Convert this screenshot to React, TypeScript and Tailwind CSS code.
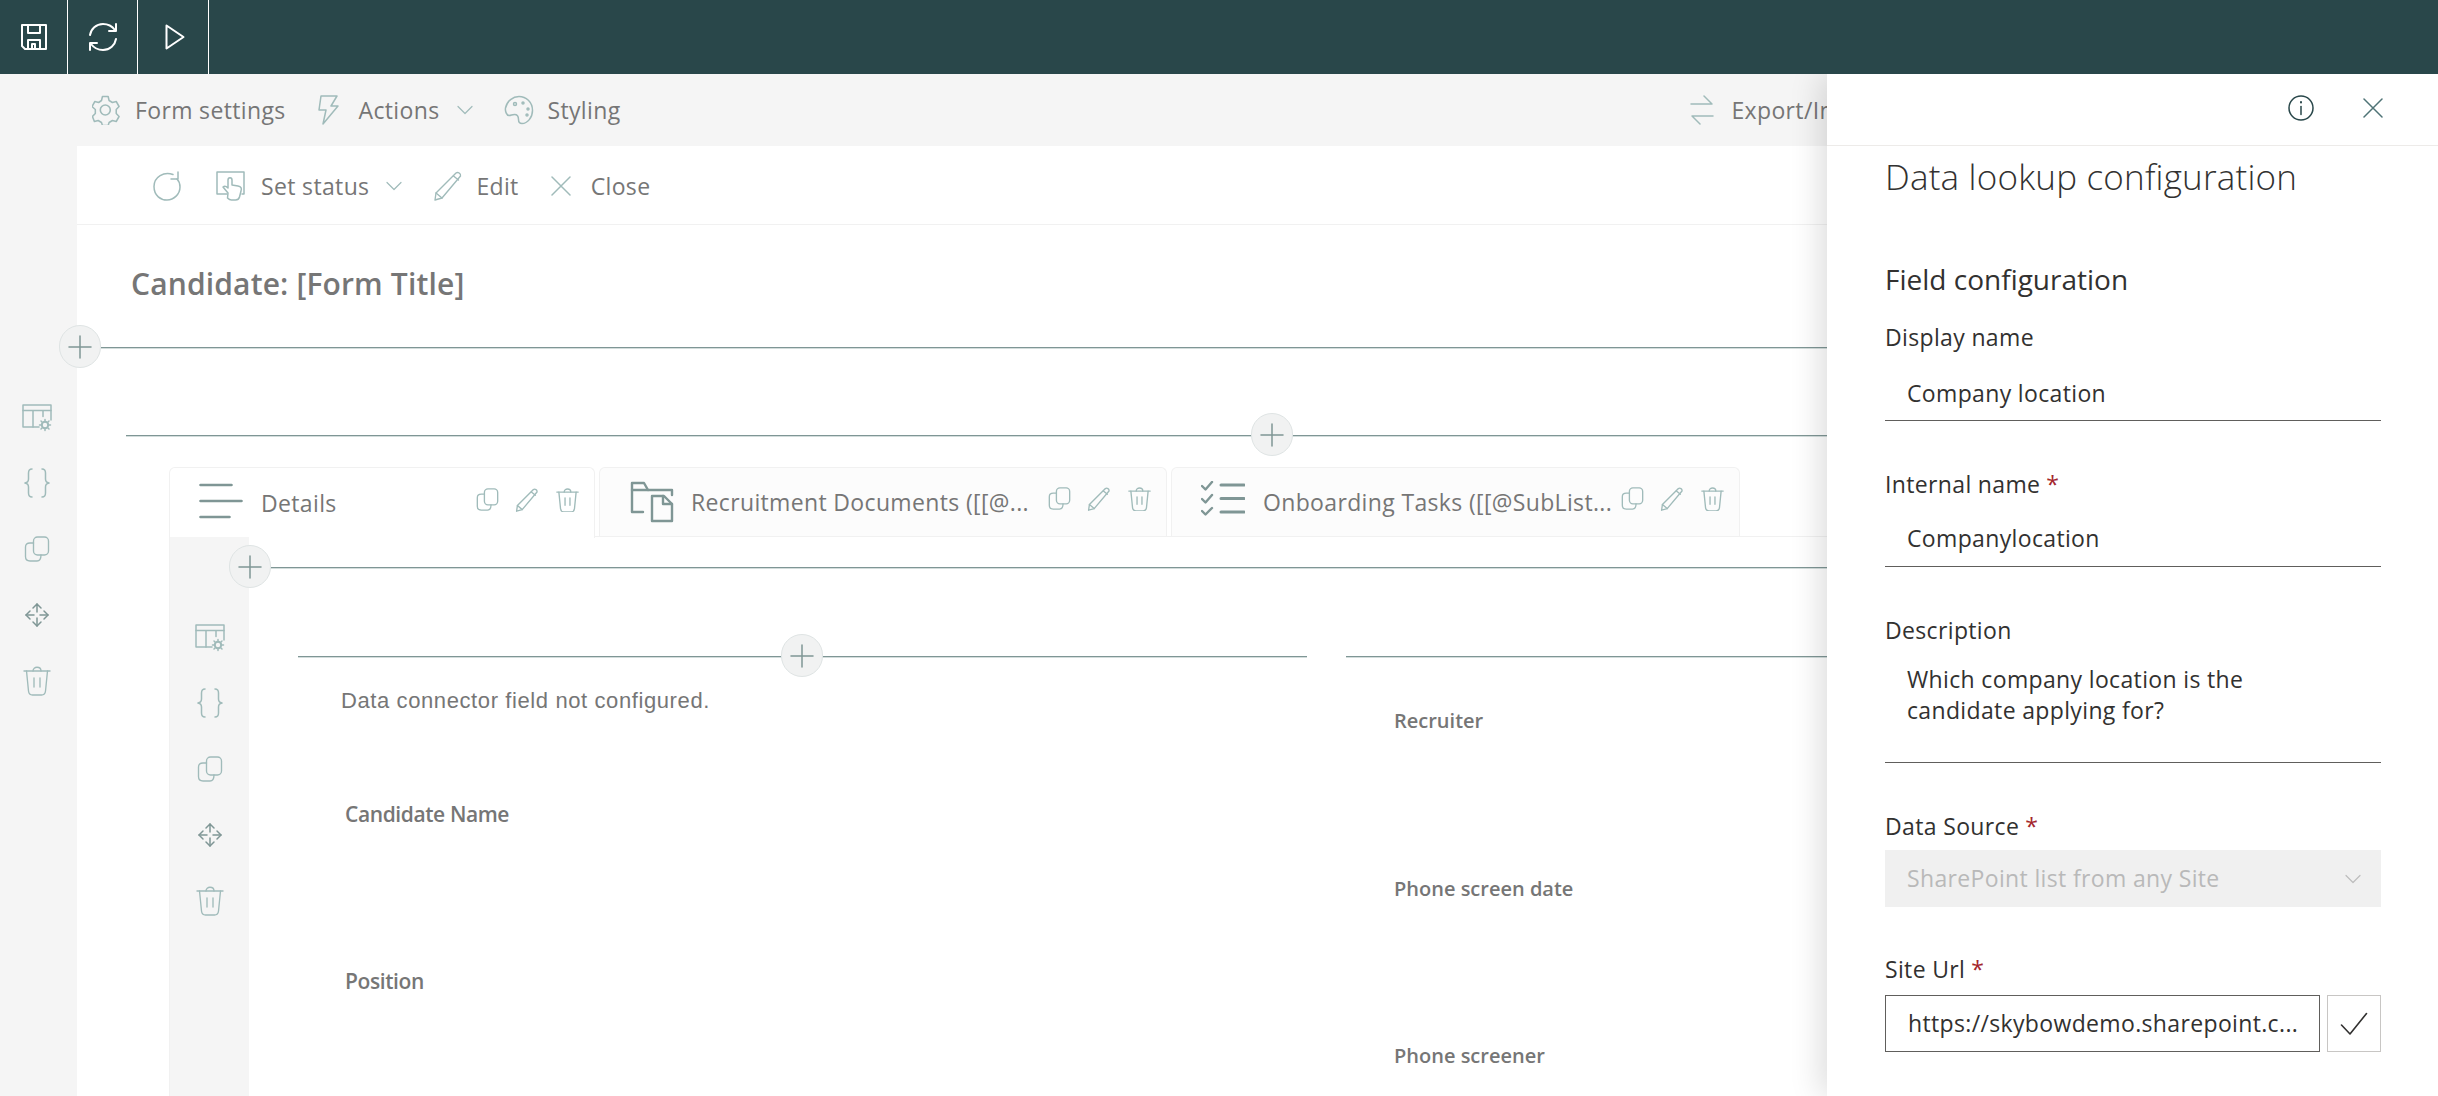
import React from "react";

type P = { className?: string };
const Base = ({ w, h, sw = 1.5, className, children }: { w: number; h: number; sw?: number; className?: string; children: React.ReactNode }) => (
  <svg width={w} height={h} viewBox={`0 0 ${w} ${h}`} fill="none" stroke="currentColor" strokeWidth={sw} strokeLinecap="round" strokeLinejoin="round" className={"shrink-0 " + (className ?? "")}>
    {children}
  </svg>
);

const Save = () => (
  <Base w={26} h={26} sw={2} className="text-white">
    <path d="M1 1h24v24H4l-3-3z" />
    <path d="M7 1v8h12V1" />
    <path d="M7 25v-9h12v9" />
    <path d="M11 25v-5h3v5" />
  </Base>
);
const Sync = () => (
  <Base w={30} h={30} sw={2} className="text-white">
    <path d="M2 13C3 7 8 2 15 2c5 0 9 2 12 6" />
    <path d="M28 2v7h-7" />
    <path d="M28 17c-1 6-6 11-13 11-5 0-9-2-12-6" />
    <path d="M2 28v-7h7" />
  </Base>
);
const Play = () => (
  <Base w={20} h={26} sw={2} className="text-white">
    <path d="M1.500 1.500 18.500 13 1.500 24.500z" />
  </Base>
);
const Gear = () => (
  <Base w={28} h={30} sw={1.6}>
    <path d="M11 2h6l1 4 3.500 2 4-1 3 5-3 3v4l3 3-3 5-4-1-3.500 2-1 3h-6l-1-3-3.500-2-4 1-2-5 3-3v-4L0 12l3-5 4 1 3-2z" transform="translate(0 -.5) scale(.95 1)" />
    <circle cx="13.300" cy="15" r="5" />
  </Base>
);
const Bolt = () => (
  <Base w={22} h={30}>
    <path d="M4 1h16l-6 10h7L6 29l3-14H2z" />
  </Base>
);
const Chevron = ({ className }: P) => (
  <Base w={16} h={10} sw={1.2} className={className}>
    <path d="M1 1.500 8 8.500l7-7" />
  </Base>
);
const Palette = () => (
  <Base w={30} h={30}>
    <path d="M15 1.500C22 1.500 28.500 7 28.500 15.500c0 7-5 13-10.500 13-3 0-3.500-2-3.500-4 0-3-1-5-4-5-3 0-3 1-5.500 1C2.500 20.500 1 16 1.500 13 3 6 9 1.500 15 1.500z" />
    <circle cx="11" cy="9" r="1.500" />
    <circle cx="19" cy="8" r="1" />
    <circle cx="24" cy="14" r="1" />
    <circle cx="23" cy="20" r="1" />
  </Base>
);
const Exchange = () => (
  <Base w={24} h={30}>
    <path d="M1 9h21l-8-8" />
    <path d="M23 21H2l8 8" />
  </Base>
);
const Refresh = () => (
  <Base w={30} h={30}>
    <path d="M21 3.500C12 0 2 6 2 15.500S9 29 15 29c7 0 13-6 13-13 0-3-1-6-3-8" />
    <path d="M26 1v7h-7" />
  </Base>
);
const Status = () => (
  <Base w={30} h={30}>
    <path d="M11 23H1V1h27v22h-2" />
    <path d="M12 22 7 16c2-1.500 3-1 5 1V9c0-3 4-3 4 0v5l6 1c3 .5 4 2 3 5l-1.500 6c-.5 2-2 3-4 3h-4c-1.500 0-3-1-4-2z" fill="#ffffff" />
  </Base>
);
const Pencil = ({ s = 30 }: { s?: number }) => (
  <svg width={s} height={s} viewBox="0 0 30 30" fill="none" stroke="currentColor" strokeWidth={1.5 * (30 / s) * 0.9} strokeLinejoin="round" strokeLinecap="round" className="shrink-0">
    <path d="M23 2c2-1.500 5 .5 4.500 3L9 27l-7 2 1-7z" />
    <path d="M20.500 5l5 4M3 22l6 5" />
  </svg>
);
const XIcon = ({ s = 20 }: { s?: number }) => (
  <Base w={s} h={s}>
    <path d={`M1 1 ${s - 1} ${s - 1}M${s - 1} 1 1 ${s - 1}`} />
  </Base>
);
const TableGear = () => (
  <Base w={30} h={28}>
    <path d="M17 23H1V1h28v15" />
    <path d="M1 6.500h28M11 6.500V23M21 6.500v6" />
    <circle cx="23" cy="21" r="3.200" strokeWidth="2" />
    <path d="M23 15.500v2M23 24.500v2M17.500 21h2M26.500 21h2M19 17l1.500 1.500M25.500 23.500 27 25M19 25l1.500-1.500M25.500 18.500 27 17" />
  </Base>
);
const Braces = () => (
  <Base w={26} h={30}>
    <path d="M8 1C5 1 4.500 2.500 4.500 5v6c0 2-1 3.500-3.500 4 2.500.5 3.500 2 3.500 4v6c0 2.500.5 4 3.500 4" />
    <path d="M18 1c3 0 3.500 1.500 3.500 4v6c0 2 1 3.500 3.500 4-2.500.5-3.500 2-3.500 4v6c0 2.500-.5 4-3.500 4" />
  </Base>
);
const Copy = ({ s = 26 }: { s?: number }) => (
  <svg width={s} height={s} viewBox="0 0 26 26" fill="none" stroke="currentColor" strokeWidth={1.5 * (26 / s) * 0.9} strokeLinecap="round" strokeLinejoin="round" className="shrink-0">
    <rect x="9.500" y="1" width="15" height="18" rx="4" />
    <path d="M9.500 7H6C3 7 1.500 8.500 1.500 11v9.500C1.500 23.500 3 25 6 25h7c2.500 0 4-1.500 4-6" />
  </svg>
);
const MoveIcon = () => (
  <Base w={26} h={26} className="text-[#7f9695]">
    <path d="M13 2v8M13 16v8M2 13h8M16 13h8" />
    <path d="M9 6l4-4 4 4M9 20l4 4 4-4M6 9l-4 4 4 4M20 9l4 4-4 4" />
  </Base>
);
const Trash = ({ s = 28 }: { s?: number }) => (
  <svg width={s} height={s * 30 / 28} viewBox="0 0 28 30" fill="none" stroke="currentColor" strokeWidth={1.5 * (28 / s) * 0.9} strokeLinecap="round" strokeLinejoin="round" className="shrink-0">
    <path d="M1 5h26" />
    <path d="M10 5c0-5 8-5 8 0" />
    <path d="M3.500 5l2 20c.2 2 1.500 4 4 4h9c2.500 0 3.800-2 4-4l2-20" />
    <path d="M11 12v9M17 12v9" />
  </svg>
);
const DetailsIcon = () => (
  <Base w={44} h={36} sw={2.6}>
    <path d="M1.500 2h31M1.500 18h41M1.500 34h29" />
  </Base>
);
const FolderDoc = () => (
  <Base w={44} h={42} sw={2.4}>
    <path d="M13 31H2V2h12l4 7h24v5" />
    <path d="M2 9h16" />
    <path d="M22 40V15h12l8 8v17z" />
    <path d="M33 15v8h9" />
  </Base>
);
const Checklist = () => (
  <Base w={44} h={36} sw={2.4}>
    <path d="M1 5l3.500 3.500L11 1M1 18l3.500 3.500L11 14M1 30l3.500 3.500L11 27" />
    <path d="M20 4h23M20 17.500h23M20 31h23" strokeWidth="3" />
  </Base>
);
const Plus = () => (
  <Base w={24} h={24} sw={1.5} className="text-[#7f9695]">
    <path d="M12 1v22M1 12h22" />
  </Base>
);
const Info = () => (
  <Base w={26} h={26} sw={1.5} className="text-[#29474a]">
    <circle cx="13" cy="13" r="12" />
    <path d="M13 11.500v8" />
    <path d="M13 7v.5" strokeWidth="2" />
  </Base>
);
const Check = () => (
  <Base w={28} h={24} sw={1.6} className="text-[#323130]">
    <path d="M1.500 13 10 22 26.500 1.500" />
  </Base>
);

const AddCircle = ({ className }: P) => (
  <div className={"absolute w-[42px] h-[43px] rounded-full bg-[#f1f2f2] border border-[#dfe4e4] flex items-center justify-center " + (className ?? "")}>
    <Plus />
  </div>
);

const Rail = ({ className }: P) => (
  <div className={"flex flex-col items-center text-[#a0bbba] " + (className ?? "")}>
    <div className="h-[66px] flex items-center pt-[2px]"><TableGear /></div>
    <div className="h-[66px] flex items-center"><Braces /></div>
    <div className="h-[66px] flex items-center"><Copy /></div>
    <div className="h-[66px] flex items-center"><MoveIcon /></div>
    <div className="h-[66px] flex items-center"><Trash /></div>
  </div>
);

const TabActions = () => (
  <div className="ml-auto flex items-center gap-[16px] pr-[15px] mt-[-6px] text-[#a0bbba]">
    <div className="w-[24px] flex justify-center"><Copy s={23} /></div>
    <div className="w-[24px] flex justify-center"><Pencil s={24} /></div>
    <div className="w-[24px] flex justify-center"><Trash s={23} /></div>
  </div>
);

const Req = () => <span className="text-[#a4262c] ml-[6px]">*</span>;

export default function App() {
  return (
    <div className="relative w-[2438px] h-[1096px] overflow-hidden flex flex-col bg-white font-['Open_Sans',sans-serif] text-[23px] tracking-[0.35px] text-[#767676]">
      <header className="relative z-20 h-[74px] shrink-0 bg-[#29474a] flex">
        <div className="w-[68px] flex items-center justify-center border-r border-white"><Save /></div>
        <div className="w-[70px] flex items-center justify-center border-r border-white"><Sync /></div>
        <div className="w-[71px] flex items-center justify-center border-r border-white pl-[4px]"><Play /></div>
      </header>

      <div className="h-[72px] shrink-0 bg-[#f5f5f5] flex items-center pl-[92px] text-[#a0bbba]">
        <Gear />
        <span className="ml-[15px] text-[#767676]">Form settings</span>
        <div className="ml-[31px]"><Bolt /></div>
        <span className="ml-[20px] text-[#767676]">Actions</span>
        <Chevron className="ml-[18px]" />
        <div className="ml-[31px]"><Palette /></div>
        <span className="ml-[13px] text-[#767676]">Styling</span>
        <div className="ml-[1070px]"><Exchange /></div>
        <span className="ml-[17px] text-[#767676]">Export/Import</span>
      </div>

      <div className="flex-1 min-h-0 flex">
        <Rail className="w-[77px] shrink-0 bg-[#f5f5f5] pt-[238px] pr-[3px]" />

        <main className="flex-1 min-w-0 bg-white flex flex-col">
          <div className="h-[79px] shrink-0 border-b border-[#f1f1f1] flex items-center pl-[75px] pt-[2px] text-[#a0bbba]">
            <Refresh />
            <div className="ml-[34px]"><Status /></div>
            <span className="ml-[15px] text-[#767676]">Set status</span>
            <Chevron className="ml-[17px]" />
            <div className="ml-[31px]"><Pencil /></div>
            <span className="ml-[13px] text-[#767676]">Edit</span>
            <div className="ml-[32px]"><XIcon s={20} /></div>
            <span className="ml-[20px] text-[#767676]">Close</span>
          </div>

          <div className="h-[122px] shrink-0 pl-[54px] pt-[39px]">
            <h1 className="text-[30px] leading-[40px] font-semibold text-[#767676] tracking-[0.15px]">Candidate: [Form Title]</h1>
          </div>

          <div className="relative h-px shrink-0 ml-[24px] bg-[#7f9695] shadow-[0_1px_0_#d3dddc]">
            <AddCircle className="left-[-42px] top-[-22px]" />
          </div>

          <div className="relative h-px shrink-0 ml-[49px] mt-[87px] bg-[#7f9695] shadow-[0_1px_0_#d3dddc]">
            <AddCircle className="left-[1125px] top-[-22px]" />
          </div>

          <div className="ml-[92px] mt-[31px] flex-1 min-h-0 flex flex-col">
            <div className="h-[70px] shrink-0 flex gap-[4px] border-b border-[#f1f1f1]">
              <div className="w-[426px] h-[71px] bg-white border border-b-0 border-[#f1f1f1] rounded-t-[6px] flex items-center pl-[29px]">
                <div className="text-[#7f9695] mt-[-4px]"><DetailsIcon /></div>
                <span className="ml-[18px]">Details</span>
                <TabActions />
              </div>
              <div className="w-[568px] bg-[#fcfcfc] border border-b-0 border-[#f1f1f1] rounded-t-[6px] flex items-center pl-[30px]">
                <div className="text-[#7f9695] mt-[-1px]"><FolderDoc /></div>
                <span className="ml-[17px] whitespace-nowrap">Recruitment Documents ([[@...</span>
                <TabActions />
              </div>
              <div className="w-[569px] bg-[#fcfcfc] border border-b-0 border-[#f1f1f1] rounded-t-[6px] flex items-center pl-[29px]">
                <div className="text-[#7f9695] mt-[-6px]"><Checklist /></div>
                <span className="ml-[18px] whitespace-nowrap">Onboarding Tasks ([[@SubList...</span>
                <TabActions />
              </div>
            </div>

            <div className="flex-1 min-h-0 flex">
              <Rail className="w-[80px] shrink-0 bg-[#f5f5f5] border-l border-[#f1f1f1] pt-[67px]" />
              <div className="flex-1 min-w-0">
                <div className="relative h-px mt-[30px] ml-[21px] bg-[#7f9695] shadow-[0_1px_0_#d3dddc]">
                  <AddCircle className="left-[-41px] top-[-22px]" />
                </div>
                <div className="mt-[88px] ml-[49px] flex gap-[39px]">
                  <div className="w-[1009px] shrink-0">
                    <div className="relative h-px bg-[#7f9695] shadow-[0_1px_0_#d3dddc]">
                      <AddCircle className="left-[483px] top-[-22px]" />
                    </div>
                    <p className="mt-[30px] ml-[43px] h-[28px] leading-[28px] text-[22px] font-['Liberation_Sans',sans-serif] tracking-[0.6px]">Data connector field not configured.</p>
                    <p className="mt-[85px] ml-[47px] h-[28px] leading-[28px] text-[21px] font-semibold tracking-[-0.4px]">Candidate Name</p>
                    <p className="mt-[139px] ml-[47px] h-[28px] leading-[28px] text-[21px] font-semibold tracking-[-0.4px]">Position</p>
                  </div>
                  <div className="flex-1 min-w-0">
                    <div className="h-px bg-[#7f9695] shadow-[0_1px_0_#d3dddc]" />
                    <p className="mt-[50px] ml-[48px] h-[28px] leading-[28px] text-[20px] font-semibold tracking-[0px]">Recruiter</p>
                    <p className="mt-[140px] ml-[48px] h-[28px] leading-[28px] text-[20px] font-semibold tracking-[0px]">Phone screen date</p>
                    <p className="mt-[139px] ml-[48px] h-[28px] leading-[28px] text-[20px] font-semibold tracking-[0px]">Phone screener</p>
                  </div>
                </div>
              </div>
            </div>
          </div>
        </main>
      </div>

      <aside className="absolute z-10 right-0 top-[74px] bottom-0 w-[611px] bg-white shadow-[-6px_0_30px_rgba(0,0,0,0.14)] flex flex-col text-[#323130]">
        <div className="h-[72px] shrink-0 border-b border-[#edebe9] flex items-center justify-end pr-[55px] pb-[4px] gap-[49px]">
          <Info />
          <div className="text-[#4f7376]"><XIcon s={20} /></div>
        </div>
        <div className="pl-[58px] pr-[57px] flex flex-col">
          <h2 className="mt-[7px] text-[35px] leading-[48px] font-light tracking-[0.2px] text-[#323130]">Data lookup configuration</h2>
          <h3 className="mt-[60px] text-[28px] leading-[36px] tracking-[0px] text-[#323130]">Field configuration</h3>
          <label className="mt-[25px] h-[30px] leading-[30px]">Display name</label>
          <div className="mt-[15px] h-[54px] border-b border-[#605e5c] pl-[22px] flex items-center">Company location</div>
          <label className="mt-[49px] h-[30px] leading-[28px]">Internal name<Req /></label>
          <div className="mt-[13px] h-[54px] border-b border-[#605e5c] pl-[22px] pb-[2px] flex items-center">Companylocation</div>
          <label className="mt-[49px] h-[30px] leading-[28px]">Description</label>
          <div className="mt-[10px] h-[107px] border-b border-[#605e5c] pl-[22px] pt-[8px] leading-[31px]">Which company location is the<br />candidate applying for?</div>
          <label className="mt-[49px] h-[30px] leading-[28px]">Data Source<Req /></label>
          <div className="mt-[8px] h-[57px] bg-[#f0f0f0] pl-[22px] pr-[20px] flex items-center justify-between text-[#b9b9b9]">
            <span>SharePoint list from any Site</span>
            <Chevron className="text-[#bdbdbd]" />
          </div>
          <label className="mt-[48px] h-[30px] leading-[28px]">Site Url<Req /></label>
          <div className="mt-[10px] flex gap-[7px]">
            <div className="flex-1 min-w-0 h-[57px] border border-[#605e5c] pl-[22px] flex items-center whitespace-nowrap">https://skybowdemo.sharepoint.c...</div>
            <div className="w-[54px] h-[57px] border border-[#c8c6c4] flex items-center justify-center"><Check /></div>
          </div>
        </div>
      </aside>
    </div>
  );
}
